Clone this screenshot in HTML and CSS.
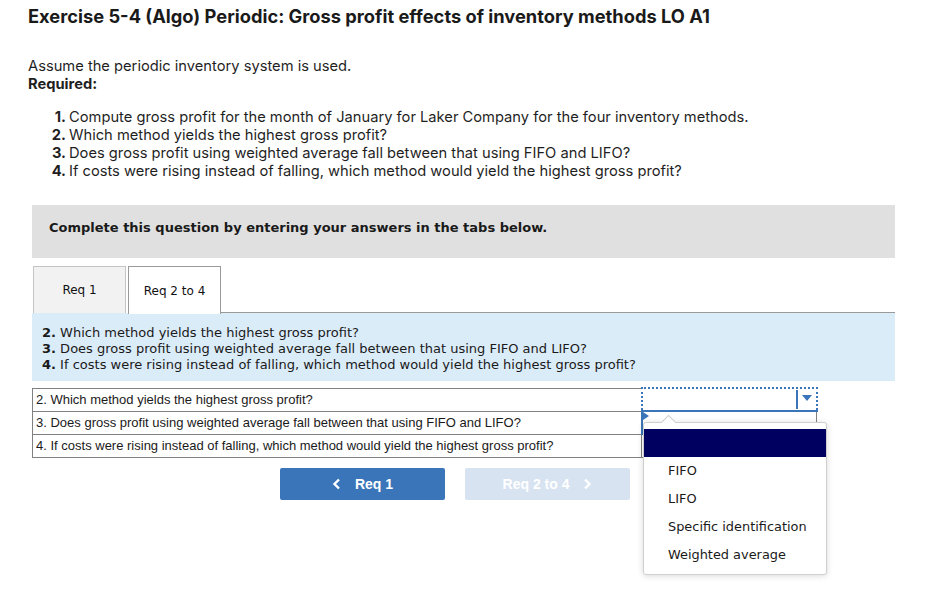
FILE: index.html
```html
<!DOCTYPE html>
<html>
<head>
<meta charset="utf-8">
<link rel="stylesheet" href="styles.css">
</head>
<body>
<div class="page">
  <h1 class="title">Exercise 5-4 (Algo) Periodic: Gross profit effects of inventory methods LO A1</h1>
  <p class="intro">Assume the periodic inventory system is used.</p>
  <p class="req">Required:</p>
  <ol class="steps">
    <li><span class="num">1.</span><span>Compute gross profit for the month of January for Laker Company for the four inventory methods.</span></li>
    <li><span class="num">2.</span><span>Which method yields the highest gross profit?</span></li>
    <li><span class="num">3.</span><span>Does gross profit using weighted average fall between that using FIFO and LIFO?</span></li>
    <li><span class="num">4.</span><span>If costs were rising instead of falling, which method would yield the highest gross profit?</span></li>
  </ol>

  <div class="qwrap">
    <div class="notice">Complete this question by entering your answers in the tabs below.</div>

    <div class="tabs">
      <div class="tab">Req 1</div>
      <div class="tab active">Req 2 to 4</div>
      <div class="tabline"></div>
    </div>

    <div class="panel">
      <div><b>2.</b> Which method yields the highest gross profit?</div>
      <div><b>3.</b> Does gross profit using weighted average fall between that using FIFO and LIFO?</div>
      <div><b>4.</b> If costs were rising instead of falling, which method would yield the highest gross profit?</div>
    </div>

    <div class="answers">
      <table class="grid">
        <tr>
          <td class="q">2. Which method yields the highest gross profit?</td>
          <td class="sel focus"><span class="drop"><span class="tri"></span></span></td>
        </tr>
        <tr>
          <td class="q">3. Does gross profit using weighted average fall between that using FIFO and LIFO?</td>
          <td class="sel next"><span class="mark"></span></td>
        </tr>
        <tr>
          <td class="q">4. If costs were rising instead of falling, which method would yield the highest gross profit?</td>
          <td class="sel"></td>
        </tr>
      </table>

      <div class="popup">
        <div class="pop-arrow"></div>
        <div class="opt hi"></div>
        <div class="opt">FIFO</div>
        <div class="opt">LIFO</div>
        <div class="opt">Specific identification</div>
        <div class="opt">Weighted average</div>
      </div>
    </div>

    <div class="nav">
      <div class="btn prev">
        <svg width="9" height="12" viewBox="0 0 9 12"><path d="M7 1.5 L2.5 6 L7 10.5" fill="none" stroke="#fff" stroke-width="2.4"/></svg>
        <span>Req 1</span>
      </div>
      <div class="btn next-btn">
        <span>Req 2 to 4</span>
        <svg width="9" height="12" viewBox="0 0 9 12"><path d="M2 1.5 L6.5 6 L2 10.5" fill="none" stroke="#fff" stroke-width="2.4"/></svg>
      </div>
    </div>
  </div>
</div>
</body>
</html>
```

FILE: styles.css
```css
html, body {
  margin: 0;
  padding: 0;
  background: #fff;
}
body {
  font-family: "Inter", "Lato", sans-serif;
  color: #1f1f1f;
}
.page {
  padding: 5px 0 0 28px;
  min-height: 594px;
}
.title {
  margin: 0;
  font-size: 18.3px;
  line-height: 22px;
  font-weight: 700;
  color: #1a1a1a;
}
.intro {
  margin: 30px 0 0 0;
  font-size: 14.7px;
  line-height: 18px;
}
.req {
  margin: 0;
  font-size: 14.7px;
  line-height: 18px;
  font-weight: 700;
}
.steps {
  list-style: none;
  margin: 15px 0 0 0;
  padding: 0;
  font-size: 14.7px;
  line-height: 18px;
}
.steps li {
  display: flex;
}
.steps .num {
  display: inline-block;
  width: 38px;
  text-align: right;
  padding-right: 3px;
  font-weight: 700;
}
.qwrap {
  margin: 25px 0 0 4px;
  width: 863px;
  position: relative;
}
.notice {
  background: #e0e0e0;
  height: 53px;
  box-sizing: border-box;
  padding: 14px 0 0 17px;
  font-family: "DejaVu Sans", Verdana, sans-serif;
  font-size: 13px;
  line-height: 18px;
  font-weight: 700;
  color: #1a1a1a;
}
.tabs {
  margin-top: 8px;
  display: flex;
  align-items: flex-end;
  padding-left: 1px;
}
.tab {
  width: 93px;
  height: 47px;
  box-sizing: border-box;
  border: 1px solid #c4c4c4;
  border-bottom: none;
  background: #f2f2f2;
  font-family: "DejaVu Sans", Verdana, sans-serif;
  font-size: 12px;
  color: #111;
  display: flex;
  align-items: center;
  justify-content: center;
  margin-right: 2px;
}
.tab.active {
  background: #fff;
  border-color: #9a9a9a;
  height: 48px;
  margin-bottom: -1px;
  position: relative;
  z-index: 1;
  margin-right: 0;
}
.tabline {
  flex: 1;
  border-bottom: 1px solid #9a9a9a;
}
.panel {
  background: #dbecf9;
  padding: 12px 0 8px 10px;
  font-family: "DejaVu Sans", Verdana, sans-serif;
  font-size: 13px;
  line-height: 16px;
  color: #1a1a1a;
}
.answers {
  margin-top: 6px;
  position: relative;
}
.grid {
  border-collapse: collapse;
  font-family: "Liberation Sans", Arial, sans-serif;
  font-size: 13px;
  color: #1a1a1a;
}
.grid td {
  height: 23px;
  box-sizing: border-box;
  padding: 0 0 0 3px;
  border: 1px solid #808080;
}
.grid td.q {
  width: 609px;
}
.grid td.sel {
  width: 175px;
  position: relative;
  padding: 0;
}
.grid tr:first-child td.q {
  border-right: none;
}
.grid td.focus {
  border: 2px dotted #3a75b9;
}
.drop {
  position: absolute;
  right: 0;
  top: 1px;
  bottom: 1px;
  width: 18px;
  border-left: 2px solid #3a75b9;
}
.tri {
  position: absolute;
  left: 4px;
  top: 5px;
  width: 0;
  height: 0;
  border-left: 5px solid transparent;
  border-right: 5px solid transparent;
  border-top: 6px solid #3a75b9;
}
.grid td.next {
  border-top: 2px solid #3a75b9;
  border-left: 2px solid #3a75b9;
}
.mark {
  position: absolute;
  left: 0;
  top: 0;
  width: 0;
  height: 0;
  border-top: 4px solid transparent;
  border-bottom: 4px solid transparent;
  border-left: 6px solid #3a75b9;
}
.popup {
  position: absolute;
  left: 611px;
  top: 35px;
  width: 184px;
  height: 153px;
  box-sizing: border-box;
  background: #fff;
  border: 1px solid #cfcfcf;
  border-radius: 3px;
  box-shadow: 0 1px 6px rgba(0,0,0,0.15);
  padding-top: 6px;
  font-family: "DejaVu Sans", Verdana, sans-serif;
  font-size: 12.9px;
  color: #1a1a1a;
  z-index: 2;
}
.pop-arrow {
  position: absolute;
  left: 19px;
  top: -6px;
  width: 10px;
  height: 10px;
  background: #fff;
  border-left: 1px solid #cfcfcf;
  border-top: 1px solid #cfcfcf;
  transform: rotate(45deg);
}
.opt {
  height: 28px;
  line-height: 28px;
  padding-left: 24px;
}
.opt.hi {
  background: #000060;
  position: relative;
}
.nav {
  display: flex;
  gap: 20px;
  margin-top: 10px;
  padding-left: 248px;
}
.btn {
  width: 165px;
  height: 32px;
  border-radius: 2px;
  display: flex;
  align-items: center;
  justify-content: center;
  gap: 14px;
  font-family: "Liberation Sans", Arial, sans-serif;
  font-size: 14px;
  font-weight: 700;
  color: #fff;
}
.btn.prev {
  background: #3a75b9;
}
.btn.next-btn {
  background: #d7e3f1;
}
```
